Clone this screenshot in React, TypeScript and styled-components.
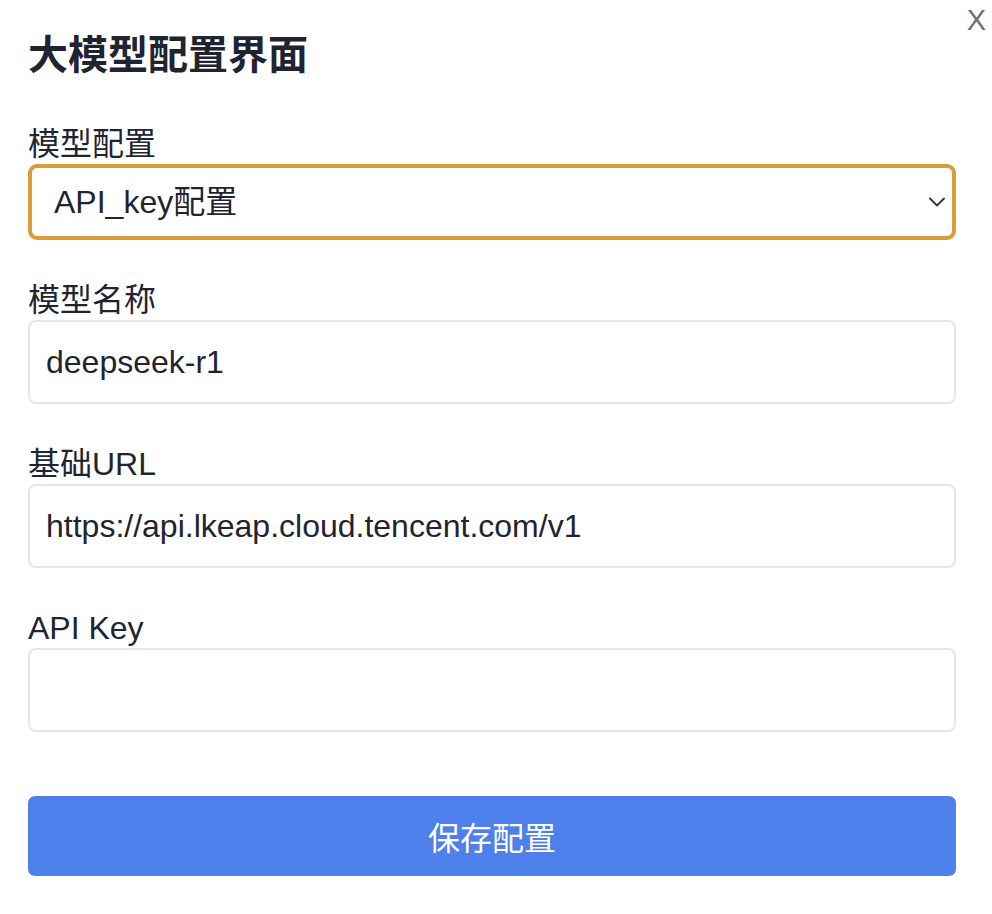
import * as React from 'react'
import styled, { createGlobalStyle } from 'styled-components'

const GlobalStyle = createGlobalStyle`
  html, body {
    margin: 0;
    padding: 0;
    background: #ffffff;
  }
  body {
    font-family: "Liberation Sans", "Noto Sans CJK SC", sans-serif;
    color: #1f2430;
  }
`

const Page = styled.div`
  position: relative;
  width: 992px;
  min-height: 914px;
  box-sizing: border-box;
  padding: 27px 36px 0 28px;
`

const CloseButton = styled.button`
  position: absolute;
  top: 3px;
  right: 6px;
  border: none;
  background: none;
  padding: 0;
  font-family: "Liberation Sans", sans-serif;
  font-size: 29px;
  line-height: 34px;
  color: #6e6e76;
  cursor: pointer;
`

const Title = styled.h1`
  margin: 0 0 41px;
  font-size: 40px;
  line-height: 56px;
  font-weight: 700;
  color: #1f2430;
`

const Form = styled.form`
  display: flex;
  flex-direction: column;
  gap: 40px;
`

const Field = styled.div`
  display: flex;
  flex-direction: column;
`

const Label = styled.label`
  display: block;
  font-size: 32px;
  line-height: 40px;
  color: #1f2430;
`

const SelectWrap = styled.div`
  position: relative;
`

const Select = styled.select`
  appearance: none;
  width: 100%;
  height: 76px;
  box-sizing: border-box;
  border: 4px solid #db9b39;
  border-radius: 9px;
  padding: 0 60px 0 22px;
  background: #ffffff;
  font-family: "Liberation Sans", "Noto Sans CJK SC", sans-serif;
  font-size: 32px;
  color: #1f2430;
  outline: none;
`

const Chevron = styled.svg`
  position: absolute;
  right: 10px;
  top: 32px;
  pointer-events: none;
`

const Input = styled.input`
  width: 100%;
  height: 84px;
  box-sizing: border-box;
  border: 2px solid #e6e6e6;
  border-radius: 8px;
  padding: 0 16px;
  background: #ffffff;
  font-family: "Liberation Sans", "Noto Sans CJK SC", sans-serif;
  font-size: 32px;
  color: #1f2430;
  outline: none;
`

const SaveButton = styled.button`
  display: block;
  width: 100%;
  height: 80px;
  margin-top: 24px;
  border: none;
  border-radius: 7px;
  background: #4d80ea;
  color: #ffffff;
  font-family: "Liberation Sans", "Noto Sans CJK SC", sans-serif;
  font-size: 32px;
  cursor: pointer;
`

const App: React.FC = () => {
  const [mode, setMode] = React.useState('api_key')
  const [modelName, setModelName] = React.useState('deepseek-r1')
  const [baseUrl, setBaseUrl] = React.useState('https://api.lkeap.cloud.tencent.com/v1')
  const [apiKey, setApiKey] = React.useState('')

  return (
    <Page>
      <GlobalStyle />
      <CloseButton aria-label="关闭">X</CloseButton>
      <Title>大模型配置界面</Title>

      <Form onSubmit={(e) => e.preventDefault()}>
        <Field>
          <Label htmlFor="mode">模型配置</Label>
          <SelectWrap>
            <Select id="mode" value={mode} onChange={(e) => setMode(e.target.value)}>
              <option value="api_key">API_key配置</option>
              <option value="local">本地模型配置</option>
            </Select>
            <Chevron width="18" height="12" viewBox="0 0 18 12" fill="none">
              <path d="M2 2.5 L9 9.5 L16 2.5" stroke="#333840" strokeWidth="2" strokeLinecap="round" strokeLinejoin="round" />
            </Chevron>
          </SelectWrap>
        </Field>

        <Field>
          <Label htmlFor="model">模型名称</Label>
          <Input id="model" value={modelName} onChange={(e) => setModelName(e.target.value)} />
        </Field>

        <Field>
          <Label htmlFor="url">基础URL</Label>
          <Input id="url" value={baseUrl} onChange={(e) => setBaseUrl(e.target.value)} />
        </Field>

        <Field>
          <Label htmlFor="key">API Key</Label>
          <Input id="key" type="password" value={apiKey} onChange={(e) => setApiKey(e.target.value)} />
        </Field>

        <SaveButton type="submit">保存配置</SaveButton>
      </Form>
    </Page>
  )
}

export default App
